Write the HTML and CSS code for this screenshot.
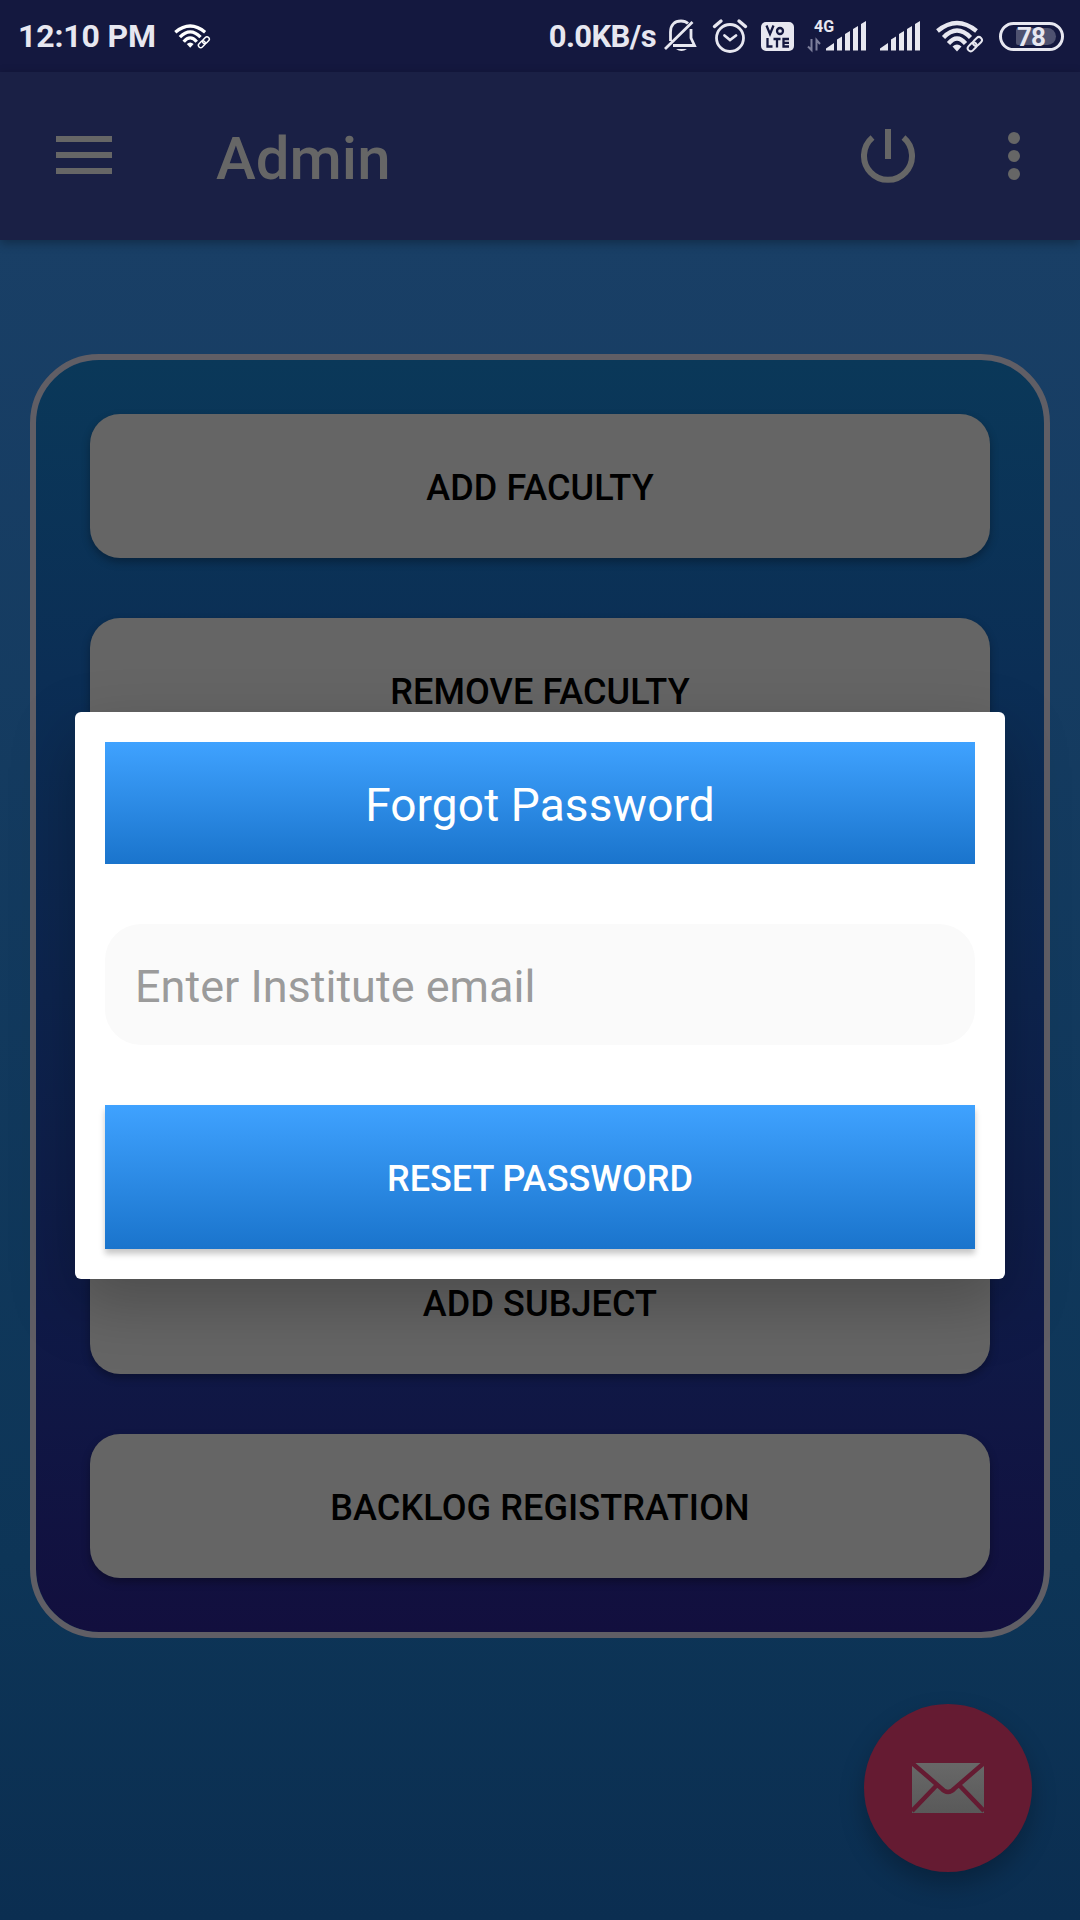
FILE: index.html
```html
<!DOCTYPE html>
<html lang="en">
<head>
<meta charset="utf-8">
<title>Admin</title>
<link rel="stylesheet" href="styles.css">
</head>
<body>
<div class="screen">
  <header class="status">
    <span class="time">12:10 PM</span>
    <svg class="wifi-small" width="37" height="26" viewBox="0 0 48 34"><use href="#wifi"/></svg>
    <span class="rate">0.0KB/s</span>
    <svg class="bell" width="34" height="36" viewBox="0 0 34 36" fill="none" stroke="#e7e7f0" stroke-width="2.8">
      <path d="M7.5 23V14C7.5 7 11.500 3 18 3c3 0 5.500 1 7 2.500M28 11v9l3.500 7.500H10M2 31 29.500 4"/>
      <path d="M13 31h11q-5.500 4-11 0z" fill="#e7e7f0" stroke="none"/>
    </svg>
    <svg class="alarm" width="36" height="36" viewBox="0 0 36 36" fill="none" stroke="#e7e7f0" stroke-width="2.800" stroke-linecap="round">
      <circle cx="18" cy="20" r="13.500"/><path d="M12.500 17.500 18 22l6-4.500" stroke-width="2.800"/><path d="M2.500 8.500 9 3M27 3l6.500 5.500" stroke-width="3.400"/>
    </svg>
    <svg class="volte" width="33" height="29" viewBox="0 0 33 29">
      <rect width="33" height="29" rx="5" fill="#e7e7f0"/>
      <g fill="none" stroke="#14183f" stroke-width="2.300"><path d="M5.500 3.500 9 12l3.500-8.500"/><circle cx="19" cy="9" r="3"/><path d="M6.500 16v8.500h5M12.500 17h7M16 17v8.500M28 17h-5.500v7.500H28M22.500 20.800H28"/></g>
    </svg>
    <svg class="signal-data" width="60" height="34" viewBox="0 0 60 34">
      <text class="net" x="6" y="12.500">4G</text>
      <path d="M3.500 20v11L0 27.500M8.500 31.500V21l3.500 4" fill="none" stroke="#7d7f9b" stroke-width="2"/>
      <use href="#bars" x="18" y="2"/>
    </svg>
    <svg class="signal" width="40" height="30" viewBox="0 0 40 30"><use href="#bars"/></svg>
    <svg class="wifi" width="48" height="34" viewBox="0 0 48 34"><use href="#wifi"/></svg>
    <span class="battery"><span class="level">78</span></span>
  </header>

  <nav class="appbar">
    <svg class="menu" width="56" height="38" viewBox="0 0 56 38"><path d="M0 3h56M0 19h56M0 35h56" stroke="#666" stroke-width="6"/></svg>
    <h1 class="title">Admin</h1>
    <svg class="power" width="54" height="54" viewBox="0 0 54 54" fill="none" stroke="#666" stroke-width="6"><path d="M27 0v30M11.500 8.500a24 24 0 1 0 31 0"/></svg>
    <svg class="more" width="12" height="48" viewBox="0 0 12 48" fill="#666"><circle cx="6" cy="6" r="6"/><circle cx="6" cy="24" r="6"/><circle cx="6" cy="42" r="6"/></svg>
  </nav>

  <main class="content">
    <section class="card">
      <button class="option">ADD FACULTY</button>
      <button class="option">REMOVE FACULTY</button>
      <button class="option"></button>
      <button class="option"></button>
      <button class="option">ADD SUBJECT</button>
      <button class="option">BACKLOG REGISTRATION</button>
    </section>
  </main>

  <button class="fab">
    <svg width="72" height="52" viewBox="0 0 72 52">
      <defs><linearGradient id="paper" x2="0" y2="1"><stop stop-color="#686868"/><stop offset="1" stop-color="#595959"/></linearGradient></defs>
      <rect y="1" width="72" height="50" fill="url(#paper)"/>
      <path d="M0 1 29 26Q36 34 43 26L72 1M24 24 0 49M48 24l24 25" fill="none" stroke="#651b32" stroke-width="4.500"/>
    </svg>
  </button>

  <div class="overlay">
    <form class="dialog">
      <h2 class="heading">Forgot Password</h2>
      <input class="email" type="text" placeholder="Enter Institute email">
      <button class="reset" type="button">RESET PASSWORD</button>
    </form>
  </div>
</div>
<svg width="0" height="0" class="defs"><defs>
  <path id="bars" fill="#e7e7f0" d="M0 29.500V27.500L8 22v7.500zM11 29.500V18.500l5-3v14zM19 29.500V13l5-3v19.500zM27 29.500V8l5-3v24.500zM35 29.500V3l5-3v29.500z"/>
  <g id="wifi" fill="none" stroke="currentColor" stroke-width="4.300">
    <path d="M1.500 12Q21-4 40.500 12M7.500 18.500Q21 4.500 34.500 18.500M12.500 24.500Q21 14.500 29.500 24.500"/>
    <path d="M16.500 27.500q4.500-4 9 0L21 32.500z" fill="currentColor" stroke="none"/>
    <g stroke-width="2" transform="rotate(-45 39 25)"><rect x="30" y="22" width="10" height="6" rx="3"/><rect x="37.500" y="22" width="10" height="6" rx="3"/></g>
  </g>
</defs></svg>
</body>
</html>
```
FILE: styles.css
```css
* { box-sizing: border-box; }
body { margin: 0; font-family: Roboto, "Liberation Sans", sans-serif; }
button, input { font: inherit; border: 0; padding: 0; margin: 0; }
svg { display: block; flex: none; }
.defs { position: absolute; }
.screen {
  position: relative;
  width: 1080px;
  height: 1920px;
  overflow: hidden;
  display: flex;
  flex-direction: column;
  background: linear-gradient(#193f66 240px, #0d3557 1560px, #0b2e51);
}
.status {
  height: 72px;
  flex: none;
  display: flex;
  align-items: center;
  background: #14183f;
  color: #e7e7f0;
  font-size: 32px;
  font-weight: 700;
  padding: 0 16px 0 18px;
}
.time { letter-spacing: -.15px; }
.wifi-small { margin-left: 18px; color: #fff; }
.rate { margin-left: auto; font-size: 31px; letter-spacing: -.6px; }
.bell { margin-left: 7px; }
.alarm { margin-left: 15px; }
.volte { margin-left: 13px; }
.signal-data { margin-left: 14px; overflow: visible; }
.net { font-size: 16px; font-weight: 700; fill: #e7e7f0; }
.signal { margin-left: 12px; }
.wifi { margin-left: 16px; }
.battery {
  width: 65px;
  height: 29px;
  margin-left: 15px;
  border: 3px solid #e7e7f0;
  border-radius: 15px;
  display: flex;
  justify-content: flex-end;
  padding: 3px 5px 3px 0;
}
.level {
  width: 40px;
  background: #4f5270;
  border-radius: 2px 9px 9px 2px;
  font-size: 26px;
  letter-spacing: -.8px;
  line-height: 18px;
  padding-left: 1px;
}
.appbar {
  height: 168px;
  flex: none;
  display: flex;
  align-items: center;
  padding: 0 60px 0 56px;
  background: #1a2045;
  color: #666;
  box-shadow: 0 3px 10px rgba(0, 0, 0, .3);
}
.menu { margin-bottom: 2px; }
.title { margin: 5px auto 0 104px; font-size: 60px; font-weight: 500; }
.power { margin-right: 93px; }
.content { padding: 114px 30px 0; }
.card {
  height: 1284px;
  padding: 54px;
  border: 6px solid #605e65;
  border-radius: 69px;
  display: flex;
  flex-direction: column;
  gap: 60px;
  background: linear-gradient(#0a3859, #0b2e55 25%, #0f1a47 75%, #120f3e) padding-box;
}
.option {
  height: 144px;
  flex: none;
  border-radius: 30px;
  background: #656565;
  color: #000;
  font-size: 36px;
  font-weight: 500;
  letter-spacing: .1px;
  padding-top: 3px;
  box-shadow: 0 4px 9px rgba(0, 0, 0, .3);
}
.fab {
  position: absolute;
  left: 864px;
  top: 1704px;
  width: 168px;
  height: 168px;
  border-radius: 50%;
  display: flex;
  align-items: center;
  justify-content: center;
  background: #651b32;
  box-shadow: 0 12px 24px rgba(0, 0, 0, .25);
}
.overlay {
  position: absolute;
  inset: 71px 0 0;
  display: flex;
  align-items: center;
  justify-content: center;
}
.dialog {
  width: 930px;
  height: 567px;
  padding: 30px;
  border-radius: 6px;
  background: #fff;
  display: flex;
  flex-direction: column;
  box-shadow: 0 24px 64px rgba(0, 0, 0, .25);
}
.heading {
  margin: 0;
  height: 122px;
  display: flex;
  align-items: center;
  justify-content: center;
  background: linear-gradient(#3fa2ff, #1a74cc);
  color: #fff;
  font-size: 46px;
  font-weight: 400;
  letter-spacing: .1px;
  padding-top: 3px;
}
.email {
  height: 121px;
  margin: 60px 0;
  padding: 3px 30px 0;
  border-radius: 36px;
  background: #fafafa;
  font-size: 45px;
}
.email::placeholder { color: #9b9b9b; opacity: 1; }
.reset {
  height: 144px;
  background: linear-gradient(#3fa2ff, #1a74cc);
  color: #fff;
  font-size: 36px;
  font-weight: 500;
  padding-top: 3px;
  box-shadow: 0 5px 6px rgba(0, 0, 0, .22);
}
```
